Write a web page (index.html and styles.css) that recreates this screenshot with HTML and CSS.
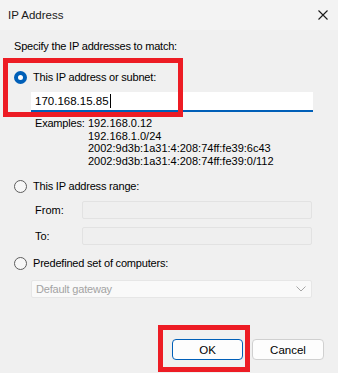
FILE: index.html
```html
<!DOCTYPE html>
<html lang="en">
<head>
    <meta charset="UTF-8">
    <title>IP Address</title>
    <link rel="stylesheet" href="styles.css">
</head>
<body>
    <div class="dialog">
        <div class="titlebar">
            <span class="title">IP Address</span>
            <svg class="close" width="10" height="10" viewBox="0 0 10 10">
                <path d="M0.5 0.5 L9.5 9.5 M9.5 0.5 L0.5 9.5" stroke="#1a1a1a" stroke-width="1.1" fill="none"/>
            </svg>
        </div>

        <div class="content">
            <div class="intro">Specify the IP addresses to match:</div>

            <!-- 单个地址或子网 -->
            <div class="option option-first">
                <span class="radio checked"></span>
                <span>This IP address or subnet:</span>
            </div>
            <div class="ip-input">170.168.15.85<span class="caret"></span></div>
            <div class="examples">
                <span class="ex-label">Examples:</span>
                <div class="ex-list">
                    <div>192.168.0.12</div>
                    <div>192.168.1.0/24</div>
                    <div>2002:9d3b:1a31:4:208:74ff:fe39:6c43</div>
                    <div>2002:9d3b:1a31:4:208:74ff:fe39:0/112</div>
                </div>
            </div>

            <!-- 地址范围 -->
            <div class="option option-range">
                <span class="radio"></span>
                <span>This IP address range:</span>
            </div>
            <div class="range-row range-from">
                <span class="range-label">From:</span>
                <div class="range-input"></div>
            </div>
            <div class="range-row range-to">
                <span class="range-label">To:</span>
                <div class="range-input"></div>
            </div>

            <!-- 预定义计算机 -->
            <div class="option option-predef">
                <span class="radio"></span>
                <span>Predefined set of computers:</span>
            </div>
            <div class="select">
                <span>Default gateway</span>
                <svg width="10" height="6" viewBox="0 0 10 6">
                    <path d="M0.5 0.5 L5 5 L9.5 0.5" stroke="#a6a6a6" stroke-width="1" fill="none"/>
                </svg>
            </div>

            <div class="buttons">
                <button class="btn btn-primary">OK</button>
                <button class="btn">Cancel</button>
            </div>
        </div>

        <div class="mark mark-subnet"></div>
        <div class="mark mark-ok"></div>
    </div>
</body>
</html>
```

FILE: styles.css
```css
* {
    box-sizing: border-box;
    margin: 0;
    padding: 0;
}
body {
    background: #f0f0f0;
    font-family: 'Segoe UI', 'Liberation Sans', Arial, sans-serif;
    font-size: 11px;
    color: #000;
}
.dialog {
    position: relative;
    width: 338px;
    height: 373px;
    overflow: hidden;
    background: #f0f0f0;
}
.titlebar {
    height: 30px;
    background: #f3f3f3;
    display: flex;
    align-items: center;
    justify-content: space-between;
    padding: 0 10px 0 8px;
}
.title {
    font-size: 11.5px;
    color: #1a1a1a;
}
.close {
    margin-top: -1px;
}
.content {
    padding-left: 14px;
}
.intro {
    height: 16px;
    line-height: 16px;
    margin-top: 8px;
    letter-spacing: -0.2px;
}
.option {
    height: 16px;
    display: flex;
    align-items: center;
    gap: 6px;
    letter-spacing: -0.2px;
}
.option-first { margin-top: 15px; }
.option-range { margin-top: 11px; }
.option-predef { margin-top: 10px; }
.radio {
    width: 13px;
    height: 13px;
    border-radius: 50%;
    border: 1px solid #5d5d5d;
    background: #f7f7f7;
    flex: none;
}
.radio.checked {
    border: 4px solid #005fb8;
    background: #fff;
}
.ip-input {
    margin: 7px 0 0 17px;
    width: 282px;
    height: 20px;
    background: #fff;
    border-bottom: 2px solid #005fb8;
    padding-left: 4px;
    font-size: 11.5px;
    display: flex;
    align-items: center;
}
.caret {
    display: inline-block;
    width: 1px;
    height: 14px;
    background: #000;
    margin-left: 1px;
}
.examples {
    display: flex;
    margin: 5px 0 0 21px;
    line-height: 12.5px;
}
.ex-label {
    flex: none;
    width: 53px;
    letter-spacing: -0.2px;
}
.range-row {
    display: flex;
    align-items: center;
    height: 18px;
    margin-left: 21px;
}
.range-from { margin-top: 7px; }
.range-to { margin-top: 8px; }
.range-label {
    flex: none;
    width: 47px;
}
.range-input {
    width: 230px;
    height: 18px;
    background: #efefef;
    border: 1px solid #e2e2e2;
    border-radius: 2px;
}
.select {
    margin: 9px 0 0 17px;
    width: 281px;
    height: 18px;
    background: #f9f9f9;
    border: 1px solid #e6e6e6;
    border-radius: 2px;
    display: flex;
    align-items: center;
    justify-content: space-between;
    padding: 0 5px 0 4px;
    color: #a3a3a3;
    letter-spacing: -0.2px;
}
.buttons {
    display: flex;
    justify-content: flex-end;
    gap: 9px;
    margin-top: 41px;
    padding-right: 14px;
}
.btn {
    width: 72px;
    height: 21px;
    font-family: inherit;
    font-size: 11.5px;
    color: #000;
    background: #fdfdfd;
    border: 1px solid #d0d0d0;
    border-radius: 4px;
}
.btn-primary {
    width: 71px;
    border-color: #005fb8;
}
/* 红色标注框 */
.mark {
    position: absolute;
    border: 5px solid #ed1c24;
}
.mark-subnet {
    left: 3px;
    top: 58px;
    width: 180px;
    height: 59px;
}
.mark-ok {
    left: 158px;
    top: 325px;
    width: 92px;
    height: 47px;
}
```
